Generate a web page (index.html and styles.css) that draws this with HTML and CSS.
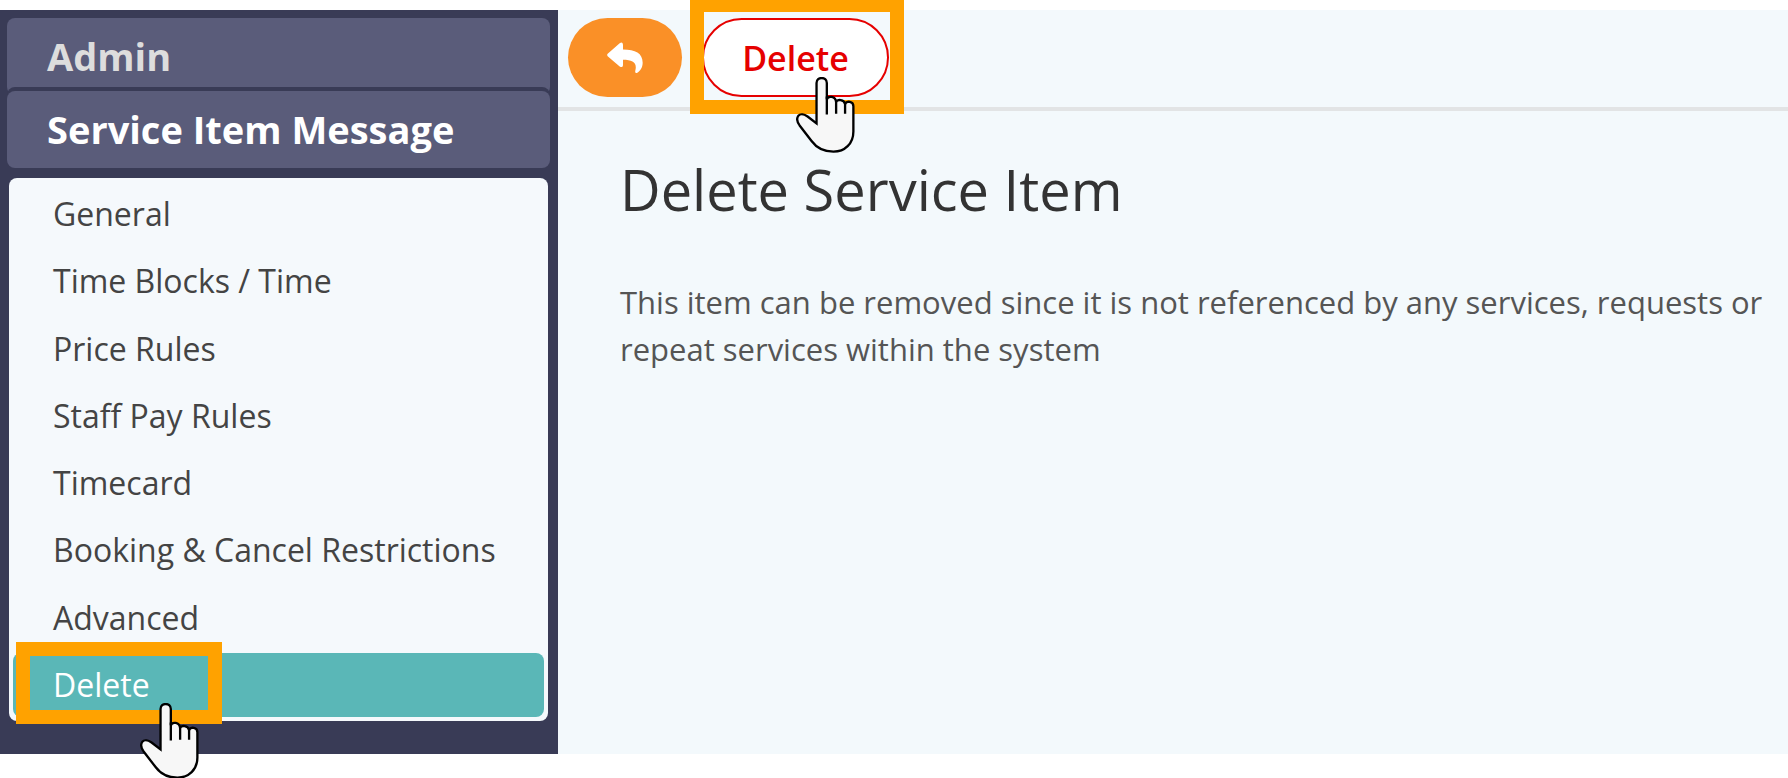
FILE: index.html
```html
<!DOCTYPE html>
<html lang="en">
<head>
  <meta charset="UTF-8">
  <title>Delete Service Item</title>
  <link rel="stylesheet" href="styles.css">
</head>
<body>
  <!-- Cursor shape shared by both pointers -->
  <svg class="sprite" aria-hidden="true">
    <symbol id="hand" viewBox="50 51 176 229">
      <path d="M111 191V69C111 49 142 49 142 69V118C146 107 168 108 170 126C174 117 194 119 197 132C202 122 222 124 222 139V215C222 252 196 276 162 276C132 276 112 266 96 244L60 197C53 187 50 176 56 168C62 161 74 163 84 170Z" fill="#f7f7f7" stroke="#000" stroke-width="7" stroke-linejoin="miter"/>
      <path d="M142 110V164M170 124V162M197 130V162" fill="none" stroke="#000" stroke-width="7"/>
    </symbol>
  </svg>

  <!-- Sidebar -->
  <aside class="sidebar">
    <a class="crumb crumb-parent" href="#">Admin</a>
    <a class="crumb" href="#">Service Item Message</a>
    <nav class="menu">
      <a class="menu-item" href="#">General</a>
      <a class="menu-item" href="#">Time Blocks / Time</a>
      <a class="menu-item" href="#">Price Rules</a>
      <a class="menu-item" href="#">Staff Pay Rules</a>
      <a class="menu-item" href="#">Timecard</a>
      <a class="menu-item" href="#">Booking &amp; Cancel Restrictions</a>
      <a class="menu-item" href="#">Advanced</a>
      <div class="marked">
        <a class="menu-item active" href="#">Delete</a>
        <span class="highlight highlight-menu"></span>
        <svg class="pointer pointer-menu" aria-hidden="true"><use href="#hand"/></svg>
      </div>
    </nav>
  </aside>

  <!-- Main area -->
  <main class="main">
    <div class="toolbar">
      <button class="btn btn-back" type="button" aria-label="Back">
        <svg class="reply" viewBox="171 126 108 95" aria-hidden="true">
          <path d="M173 161L209 129Q218 123 219 134V148C256 148 278 159 278 188C278 201 271 213 262 218Q254 221 256 211C262 187 248 179 219 179V195Q218 204 209 199L173 168Q170 164 173 161Z" fill="#fff"/>
        </svg>
      </button>
      <div class="marked">
        <button class="btn btn-delete" type="button">Delete</button>
        <span class="highlight highlight-button"></span>
        <svg class="pointer pointer-button" aria-hidden="true"><use href="#hand"/></svg>
      </div>
    </div>
    <div class="content">
      <h1>Delete Service Item</h1>
      <p>This item can be removed since it is not referenced by any services, requests or repeat services within the system</p>
    </div>
  </main>
</body>
</html>
```
FILE: styles.css
```css
* {
  box-sizing: border-box;
}
body {
  margin: 0;
  padding: 10px 0 24px;
  min-height: 100vh;
  display: flex;
  background: #fff;
  font-family: 'Open Sans', 'Noto Sans', sans-serif;
  font-size: 32px;
  overflow-x: hidden;
}
a {
  color: inherit;
  text-decoration: none;
}
.sprite {
  position: absolute;
  width: 0;
  height: 0;
}

/* Sidebar */
.sidebar {
  flex: 0 0 558px;
  display: flex;
  flex-direction: column;
  padding: 8px 8px 33px 7px;
  background: #393b56;
}
.crumb {
  padding: 0 40px;
  border-radius: 8px;
  background: #5a5c7a;
  color: #fff;
  font-size: 38px;
  font-weight: 700;
  line-height: 77px;
}
/* The parent tab is tucked under the current one */
.crumb-parent {
  margin-bottom: -4px;
  color: #ddd;
}
.crumb-parent + .crumb {
  box-shadow: 0 -4px 0 #393b56;
}
.menu {
  flex: 1;
  display: flex;
  flex-direction: column;
  justify-content: space-between;
  margin: 10px 2px 0;
  padding: 4px;
  border-radius: 8px;
  background: #f5f9fc;
}
.menu-item {
  display: block;
  padding: 0 40px;
  border-radius: 8px;
  color: #444;
  line-height: 64px;
}
.menu-item.active {
  background: #5ab7b7;
  color: #fff;
}

/* Main area */
.main {
  flex: 1;
  min-width: 0;
  background: #f3f9fc;
}
.toolbar {
  display: flex;
  gap: 20px;
  padding: 8px 10px 10px;
  border-bottom: 4px solid #e2e4e5;
}
.btn {
  height: 79px;
  border: 0;
  border-radius: 40px;
  font-family: inherit;
  font-size: 34px;
  font-weight: 600;
}
.btn-back {
  display: flex;
  align-items: center;
  justify-content: center;
  width: 114px;
  background: #fa9027;
}
.reply {
  width: 36px;
  height: 32px;
}
.btn-delete {
  display: block;
  width: 187px;
  border: 2px solid #e60000;
  background: #fff;
  color: #e60000;
}
.content {
  padding: 36px 16px 36px 62px;
}
h1 {
  margin: 0;
  color: #333;
  font-size: 56px;
  font-weight: 400;
  line-height: 84px;
}
p {
  margin: 48px 0 0;
  color: #555;
  font-size: 31px;
  line-height: 47px;
}

/* Highlight frames and pointers */
.marked {
  position: relative;
}
.highlight,
.pointer {
  position: absolute;
  pointer-events: none;
}
.highlight {
  border: 14px solid #ffa200;
}
.highlight-menu {
  top: -11px;
  left: 3px;
  width: 206px;
  height: 82px;
}
.highlight-button {
  top: -20px;
  left: -12px;
  width: 214px;
  height: 116px;
}
.pointer {
  width: 59px;
  height: 76px;
}
.pointer-menu {
  top: 50px;
  left: 127px;
}
.pointer-button {
  top: 59px;
  left: 94px;
}
```
